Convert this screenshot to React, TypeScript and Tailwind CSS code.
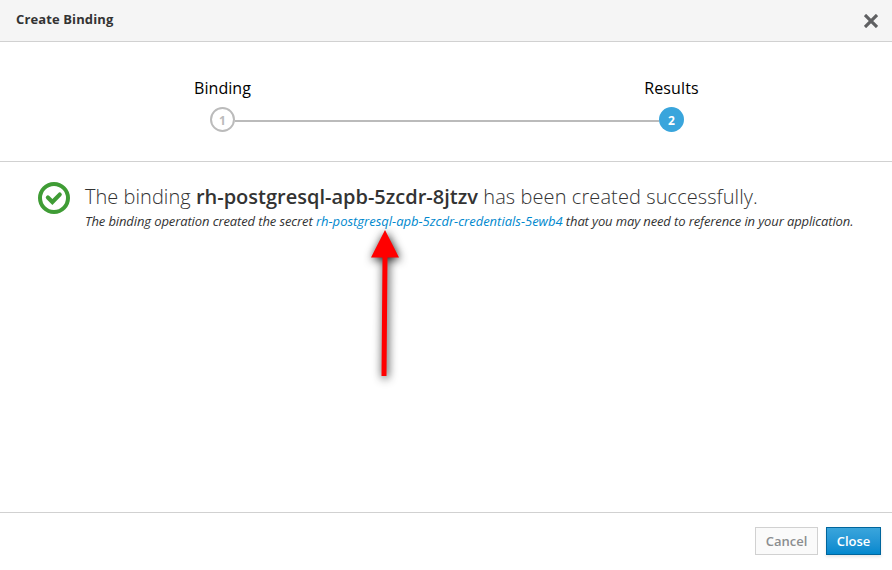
export default function App() {
  return (
    <div className="flex h-[570px] w-[892px] flex-col bg-white font-['Open_Sans',sans-serif] text-[#333]">
      <header className="flex h-[42px] shrink-0 items-center justify-between border-b border-[#d1d1d1] bg-[#f5f5f5] pr-[14px] pb-[3px] pl-4">
        <h1 className="text-[13px] leading-5 font-bold tracking-[0.12px]">Create Binding</h1>
        <button aria-label="Close dialog" className="pt-[3px]">
          <svg width="14" height="14" viewBox="0 0 14 14" fill="none" stroke="#5f6062" strokeWidth="3.2" strokeLinecap="square"><path d="M2.100 2.100l9.800 9.800M11.900 2.100L2.100 11.900" /></svg>
        </button>
      </header>
      <nav className="flex h-[120px] shrink-0 items-start border-b border-[#d1d1d1] pt-[35px] pl-[185px] text-base text-black">
        <div className="flex w-[75px] flex-col items-center">
          <span className="leading-[22px] tracking-[0.06px]">Binding</span>
          <span className="mt-2 flex size-[25px] items-center justify-center rounded-full border-2 border-[#bbb] pt-[2px] text-[12px] font-bold text-[#bbb]">1</span>
        </div>
        <div className="-mx-[25px] mt-[43px] h-[2px] w-[424px] shrink-0 bg-[#bbb]" />
        <div className="flex w-[75px] flex-col items-center">
          <span className="leading-[22px] tracking-[0.15px]">Results</span>
          <span className="mt-2 flex size-[25px] items-center justify-center rounded-full bg-[#39a5dc] pt-[2px] text-[12px] font-bold text-white">2</span>
        </div>
      </nav>
      <main className="relative flex flex-1 items-start pt-5 pl-[38px]">
        <svg className="shrink-0" width="32" height="32" viewBox="0 0 32 32" fill="none" stroke="#3f9c35"><circle cx="16" cy="16" r="14" strokeWidth="4" /><path d="M9.900 15.500l4.500 4.500 7.300-7.400" strokeWidth="4.200" strokeLinecap="round" /></svg>
        <div className="ml-[15px] whitespace-nowrap">
          <h2 className="text-[20px] leading-[29px] font-light"><span className="tracking-[0.03px]">The binding </span><b className="font-semibold">rh-postgresql-apb-5zcdr-8jtzv</b><span className="tracking-[0.09px]"> has been created successfully.</span></h2>
          <p className="text-[13px] leading-5 italic"><span className="tracking-[-0.11px]">The binding operation created the secret </span><a className="text-[#0088ce]">rh-postgresql-apb-5zcdr-credentials-5ewb4</a><span className="tracking-[-0.12px]"> that you may need to reference in your application.</span></p>
        </div>
        <svg className="absolute top-[58px] left-[360px] overflow-visible" width="50" height="170" viewBox="360 220 50 170" fill="red">
          <path className="drop-shadow-[1px_2px_5px_rgba(0,0,0,0.9)]" d="M385 230l14 27.500-11.500.100-1 118.400h-5l1-118.400-11.500-.100z" />
        </svg>
      </main>
      <footer className="flex h-[58px] shrink-0 items-start justify-end gap-2 border-t border-[#d1d1d1] pt-[14px] pr-[11px] text-[13px] font-semibold">
        <button className="h-7 w-[63px] border border-[#d1d1d1] bg-[#fafafa] pt-px text-[#8b8d8f]">Cancel</button>
        <button className="h-7 w-[55px] border border-[#00659c] bg-linear-to-b from-[#39a5dc] to-[#0088ce] pt-px text-white shadow-[0_2px_3px_rgba(3,3,3,0.1)]">Close</button>
      </footer>
    </div>
  );
}
